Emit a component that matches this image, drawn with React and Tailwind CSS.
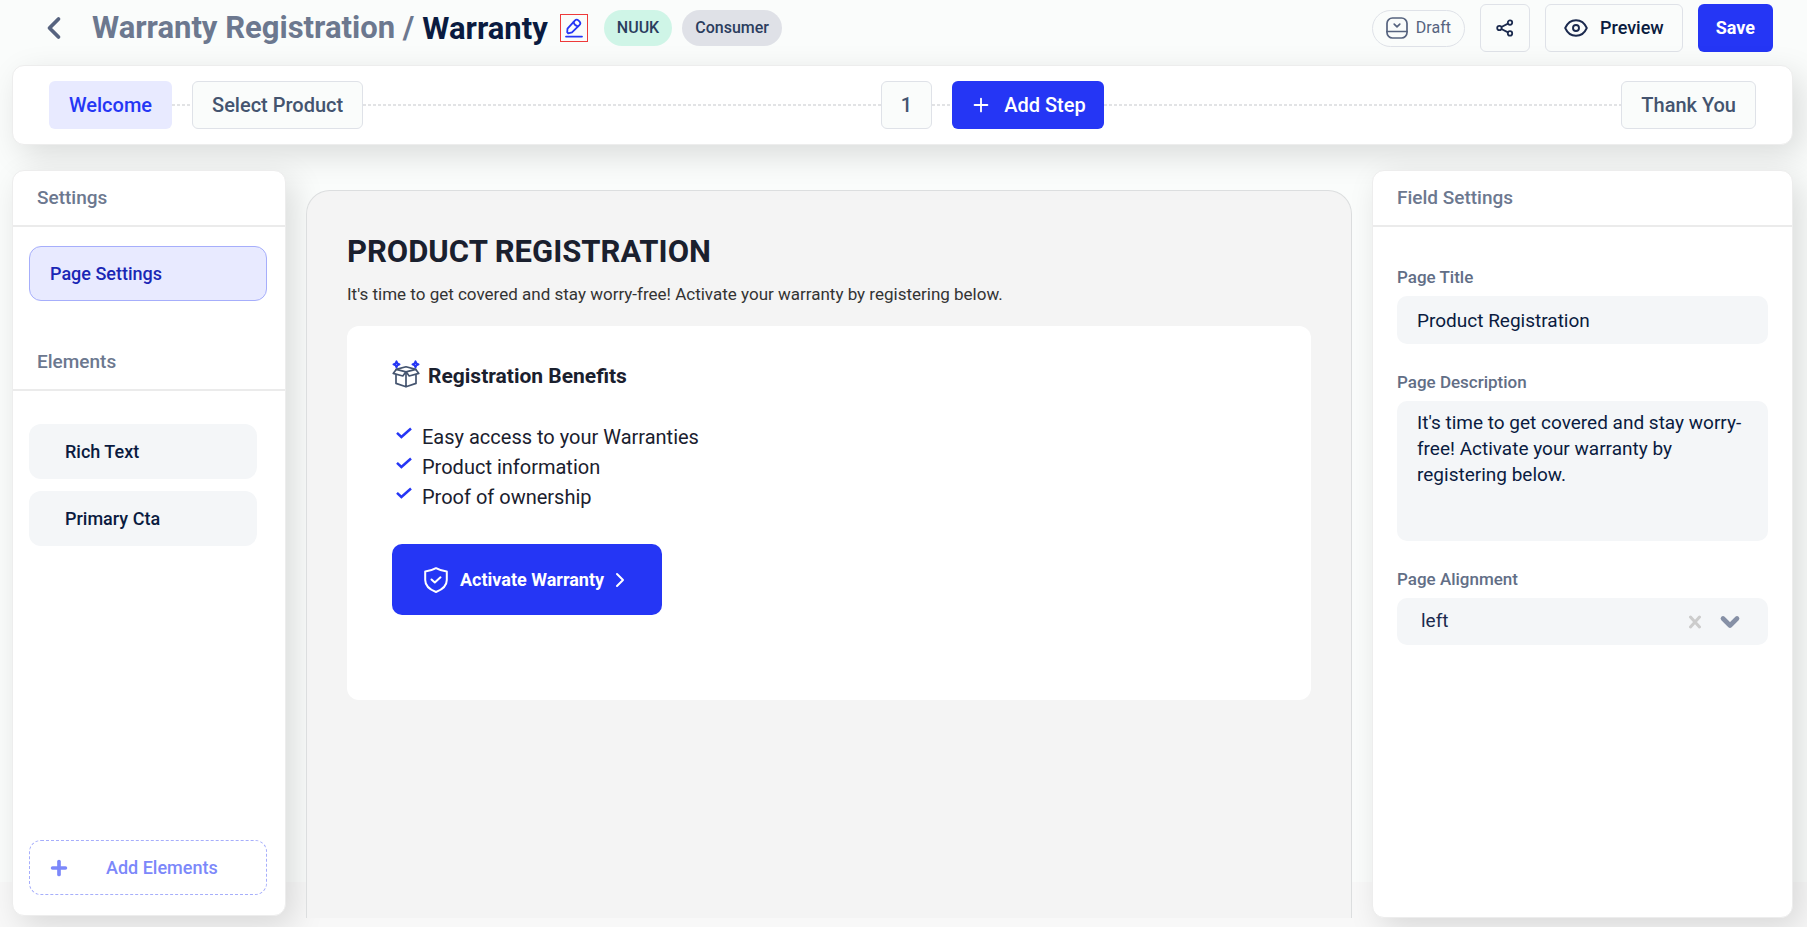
import { ChevronLeft, ChevronRight, ChevronDown, Plus } from "lucide-react";

const panel =
  "bg-white border border-[#ededed] rounded-xl shadow-[8px_10px_32px_rgba(0,0,0,0.13)]";
const stepBox =
  "h-12 shrink-0 rounded-md border border-[#dfe2e8] bg-[#fafcfb] px-[19px] text-xl font-medium text-[#44546f]";

function PencilIcon() {
  return (
    <svg className="h-5 w-5" viewBox="0 0 20 20" fill="none" stroke="#2536f5" strokeWidth="1.8" strokeLinecap="round" strokeLinejoin="round">
      <path d="M3.200 14.200 3.500 10.600 10.800 2.600a2.700 2.700 0 0 1 3.800 0l.8.8a2.700 2.700 0 0 1 0 3.800L8 14.400 4.200 15.400Z" />
      <path d="M9.600 4.200c.4 2.200 2 3.800 4.200 4.200M2 18.600h16" />
    </svg>
  );
}

function DraftIcon() {
  return (
    <svg className="h-[22px] w-[22px]" viewBox="0 0 22 22" fill="none" stroke="#56637f" strokeWidth="1.7" strokeLinecap="round" strokeLinejoin="round">
      <rect x="1" y="1" width="20" height="20" rx="5.500" />
      <path d="M1 14.500h20M8.200 7.200l2.800 2.600 2.800-2.600" />
    </svg>
  );
}

function ShareIcon() {
  return (
    <svg className="h-[18px] w-[18px]" viewBox="0 0 18 18" fill="none" stroke="#1b2a4e" strokeWidth="1.8">
      <circle cx="3.400" cy="9" r="2.200" />
      <circle cx="14" cy="3.600" r="2.200" />
      <circle cx="14" cy="14.400" r="2.200" />
      <path d="M5.400 8 12 4.600M5.400 10 12 13.400" />
    </svg>
  );
}

function EyeIcon() {
  return (
    <svg className="h-[18px] w-6" viewBox="0 0 24 18" fill="none" stroke="#1b2a4e" strokeWidth="1.900" strokeLinejoin="round">
      <path d="M1.200 9C3.400 4 7.400 1.200 12 1.200S20.600 4 22.800 9C20.600 14 16.600 16.800 12 16.800S3.400 14 1.200 9Z" />
      <circle cx="12" cy="9" r="3" />
    </svg>
  );
}

function BoxIcon() {
  return (
    <svg className="h-7 w-7" viewBox="0 0 28 28" fill="none" strokeLinejoin="round" strokeLinecap="round">
      <g stroke="#44546f" strokeWidth="1.700">
        <path d="M14 11.800 4.200 9.400 1.200 13.400 10.800 16 14 11.800 17.200 16 26.800 13.400 23.800 9.400Z" />
        <path d="M4.200 9.400 14 6.800 23.800 9.400M4 15v8.400l10 3.400 10-3.400V15M14 11.800v15" />
      </g>
      <g stroke="#2536f5" strokeWidth="2">
        <path d="M4.500 1.400 5.400 3.500 7.500 4.400 5.400 5.300 4.500 7.400 3.600 5.300 1.500 4.400 3.600 3.500Z" />
        <path d="M23.500 1.400 24.400 3.500 26.500 4.400 24.400 5.300 23.500 7.400 22.600 5.300 20.500 4.400 22.600 3.500Z" />
      </g>
    </svg>
  );
}

function CheckIcon() {
  return (
    <svg className="h-3 w-4" viewBox="0 0 16 12" fill="none" stroke="#2536f5" strokeWidth="2.500">
      <path d="M1 5.800 5.400 10 15 1.500" />
    </svg>
  );
}

function ShieldIcon() {
  return (
    <svg className="h-[26px] w-6" viewBox="0 0 24 26" fill="none" stroke="#fff" strokeWidth="2" strokeLinecap="round" strokeLinejoin="round">
      <path d="M12 1.200Q17 4 22.800 4.500V13c0 5.500-4.500 9.600-10.800 12C5.700 22.600 1.200 18.500 1.200 13V4.500Q7 4 12 1.200Z" />
      <path d="m7.500 12.500 3.300 3 5.700-5.200" />
    </svg>
  );
}

function Header() {
  return (
    <header className="flex h-14 items-center justify-between pl-6 pr-5">
      <div className="flex items-center">
        <button aria-label="Back" className="mr-5 text-[#56637f]">
          <ChevronLeft className="h-9 w-9" strokeWidth={2.5} />
        </button>
        <h1 className="flex items-center gap-2 whitespace-nowrap text-[31px] leading-9 font-bold text-[#6c788f]">
          <span>Warranty Registration /</span>
          <span className="pt-0.5 text-[#0a1b40]">Warranty</span>
        </h1>
        <button aria-label="Edit name" className="ml-3 flex h-7 w-7 items-center justify-center border border-[#ee3a3a]">
          <PencilIcon />
        </button>
        <span className="ml-4 rounded-full bg-[#cff5e7] px-[13px] py-1.5 text-base leading-6 font-medium text-[#2b3d5e]">NUUK</span>
        <span className="ml-2.5 rounded-full bg-[#dfe1e7] px-[13px] py-1.5 text-base leading-6 font-medium text-[#2b3d5e]">Consumer</span>
      </div>
      <div className="flex items-center gap-[15px]">
        <span className="flex h-[37px] items-center gap-2 rounded-full border border-[#dfe2e8] px-[13px] text-base text-[#56637f]">
          <DraftIcon />
          Draft
        </span>
        <button aria-label="Share" className="flex h-12 w-[50px] items-center justify-center rounded-md border border-[#dfe2e8]">
          <ShareIcon />
        </button>
        <button className="flex h-12 items-center gap-3 rounded-md border border-[#dfe2e8] px-[18px] text-lg font-medium text-[#0a1b40]">
          <EyeIcon />
          Preview
        </button>
        <button className="h-12 rounded-md bg-[#2536f5] px-[18px] text-lg font-bold text-white">Save</button>
      </div>
    </header>
  );
}

function Line({ className }) {
  return (
    <div
      className={
        "h-0.5 bg-[repeating-linear-gradient(to_right,#e2e3e5_0_3px,transparent_3px_5px)] " + className
      }
    />
  );
}

function Steps() {
  return (
    <nav aria-label="Steps" className={panel + " flex h-20 items-center px-9"}>
      <button className="h-12 rounded-md bg-[#e8eaff] px-5 text-xl font-medium text-[#2536f5]">Welcome</button>
      <Line className="w-5" />
      <button className={stepBox}>Select Product</button>
      <Line className="flex-1" />
      <button className={stepBox}>1</button>
      <Line className="w-5" />
      <button className="flex h-12 items-center gap-3 rounded-md bg-[#2536f5] px-[18px] text-xl font-medium text-white">
        <Plus className="h-[22px] w-[22px]" />
        Add Step
      </button>
      <Line className="flex-1" />
      <button className={stepBox}>Thank You</button>
    </nav>
  );
}

function PanelTitle({ children }) {
  return (
    <h2 className="flex h-14 items-center border-b-2 border-[#ebebeb] px-6 text-[19px] font-medium text-[#6c788f]">
      {children}
    </h2>
  );
}

function LeftPanel() {
  return (
    <aside className={panel + " mb-0.5 flex w-[274px] shrink-0 flex-col"}>
      <PanelTitle>Settings</PanelTitle>
      <div className="pt-[19px] pr-[18px] pl-4">
        <button className="h-[55px] w-full rounded-xl border border-[#a6aefb] bg-[#e8eaff] px-5 text-left text-lg font-medium text-[#1a27b5]">
          Page Settings
        </button>
      </div>
      <div className="mt-[34px]">
        <PanelTitle>Elements</PanelTitle>
      </div>
      <div className="flex flex-col gap-3 pt-[33px] pr-7 pl-4">
        <button className="h-[55px] rounded-xl bg-[#f4f6f8] px-9 text-left text-lg font-medium text-[#0a1b40]">Rich Text</button>
        <button className="h-[55px] rounded-xl bg-[#f4f6f8] px-9 text-left text-lg font-medium text-[#0a1b40]">Primary Cta</button>
      </div>
      <div className="mt-auto pr-[18px] pb-5 pl-4">
        <button className="flex h-[55px] w-full items-center gap-9 rounded-xl border border-dashed border-[#a6aefb] px-[18px] text-lg font-medium text-[#7c88fa]">
          <Plus className="h-[22px] w-[22px]" strokeWidth={4} />
          Add Elements
        </button>
      </div>
    </aside>
  );
}

function Canvas() {
  return (
    <main className="mt-5 flex-1 rounded-t-3xl border border-b-0 border-[#dcdedf] bg-[#f4f4f4] px-10 pt-[43px]">
      <h2 className="text-[31px] leading-9 font-bold text-[#1a202e]">PRODUCT REGISTRATION</h2>
      <p className="mt-3 text-[17px] leading-6 text-[#333]">
        It's time to get covered and stay worry-free! Activate your warranty by registering below.
      </p>
      <section className="mt-5 rounded-xl bg-white px-[45px] pt-8 pb-[85px]">
        <h3 className="flex items-center gap-2 text-[21px] leading-9 font-bold text-[#1a202e]">
          <span className="pb-1"><BoxIcon /></span>
          Registration Benefits
        </h3>
        <ul className="mt-7 text-xl leading-[30px] text-[#1a202e]">
          {["Easy access to your Warranties", "Product information", "Proof of ownership"].map((t) => (
            <li key={t} className="flex items-center gap-2.5 pl-1">
              <span className="pb-2"><CheckIcon /></span>
              {t}
            </li>
          ))}
        </ul>
        <button className="mt-8 flex h-[71px] items-center rounded-[10px] bg-[#2536f5] pr-[30px] pl-8 text-lg font-bold text-white">
          <ShieldIcon />
          <span className="mr-1 ml-3">Activate Warranty</span>
          <ChevronRight className="h-6 w-6" />
        </button>
      </section>
    </main>
  );
}

const label = "block text-[17px] leading-6 font-medium text-[#626e86]";
const field = "mt-[7px] block w-full rounded-[10px] bg-[#f4f6f8] text-[19px] text-[#0a1b40]";

function RightPanel() {
  return (
    <aside className={panel + " w-[421px] shrink-0"}>
      <PanelTitle>Field Settings</PanelTitle>
      <div className="px-6 pt-[38px]">
        <label htmlFor="title" className={label}>Page Title</label>
        <input id="title" defaultValue="Product Registration" className={field + " h-12 px-5"} />
        <label htmlFor="desc" className={label + " mt-[26px]"}>Page Description</label>
        <textarea
          id="desc"
          defaultValue="It's time to get covered and stay worry-free! Activate your warranty by registering below."
          className={field + " h-[140px] resize-none px-5 py-[9px] leading-[26px]"}
        />
        <label htmlFor="align" className={label + " mt-[26px]"}>Page Alignment</label>
        <div className="mt-[7px] flex h-[47px] items-center rounded-[10px] bg-[#f4f6f8] pr-6 pl-6">
          <select id="align" className="flex-1 appearance-none bg-transparent text-[19px] text-[#1b2a4e]">
            <option>left</option>
          </select>
          <button aria-label="Clear" className="mr-3.5">
            <svg className="h-3.5 w-3.5" viewBox="0 0 14 14" fill="none" stroke="#ccc" strokeWidth="3" strokeLinecap="round">
              <path d="M2.500 2 11.500 12M11.500 2 2.500 12" />
            </svg>
          </button>
          <ChevronDown className="h-7 w-7 text-[#8690a6]" strokeWidth={4} />
        </div>
      </div>
    </aside>
  );
}

export default function App() {
  return (
    <div className="flex min-h-screen flex-col bg-[linear-gradient(to_top,#f8f8f8_45px,#fafcfb_45px)] pr-3.5 pb-[9px] pl-3 font-[Roboto,'Liberation_Sans',sans-serif]">
      <Header />
      <div className="mt-[9px]"><Steps /></div>
      <div className="mt-[25px] flex flex-1 gap-5">
        <LeftPanel />
        <Canvas />
        <RightPanel />
      </div>
    </div>
  );
}
